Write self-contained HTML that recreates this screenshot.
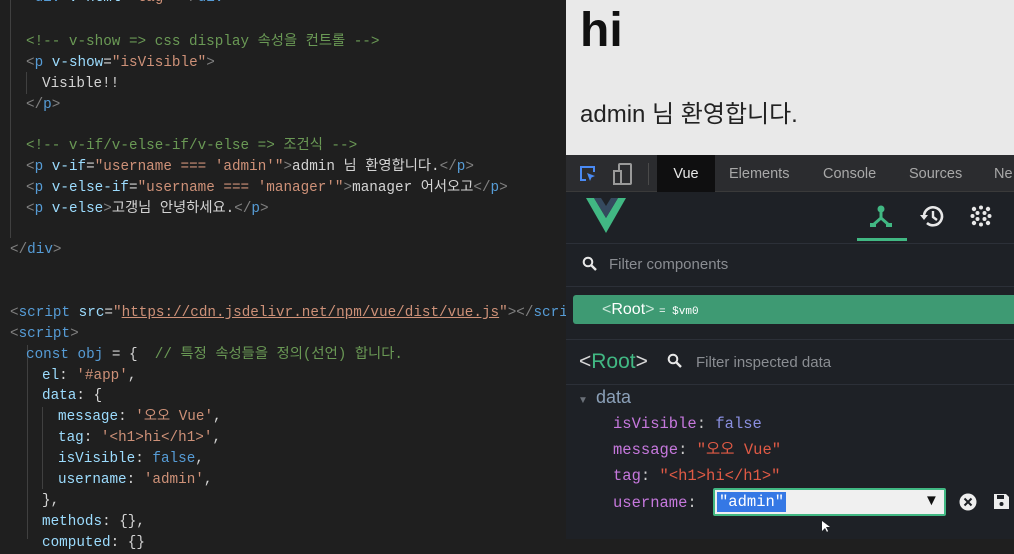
<!DOCTYPE html>
<html><head><meta charset="utf-8"><style>
*{margin:0;padding:0;box-sizing:border-box}
body{width:1014px;height:539px;overflow:hidden;background:#1f1f1f;position:relative;font-family:"Liberation Sans","Noto Sans CJK KR",sans-serif}
.ed{position:absolute;left:0;top:0;width:566px;height:539px;background:#1f1f1f;font-family:"Liberation Mono","Noto Sans CJK KR",monospace;font-size:14.3px;color:#d4d4d4}
.l{position:absolute;white-space:pre;height:21px;line-height:21px;margin-top:2px}
.t{color:#808080}.n{color:#569cd6}.a{color:#9cdcfe}.s{color:#ce9178}.c{color:#6a9955}.w{color:#d4d4d4}.k{color:#569cd6}
.guide{position:absolute;width:1px;background:#404040}
.rp{position:absolute;left:566px;top:0;width:448px;height:539px;background:#1e2126}
.page{position:absolute;left:0;top:0;width:448px;height:155px;background:#e9e9e9;color:#111}
.tabs{position:absolute;left:0;top:155px;width:448px;height:37px;background:#2b2c2f;border-bottom:1px solid #3a3a3a}
.tab{position:absolute;top:2px;height:35px;line-height:35px;font-size:14.5px;color:#a8a8a8}
.sep{position:absolute;left:0;width:448px;height:1px;background:#2c3038}
.mono{font-family:"Liberation Mono","Noto Sans CJK KR",monospace}
</style></head><body>
<div class="ed">
<div class="guide" style="left:10px;top:0;height:238px"></div>
<div class="guide" style="left:26px;top:72px;height:22px"></div>
<div class="guide" style="left:27px;top:345px;height:194px"></div>
<div class="guide" style="left:42px;top:407px;height:82px"></div>
<div class="l" style="left:26px;top:-14px"><span class="t">&lt;</span><span class="n">div</span> <span class="a">v-html</span>=<span class="s">"tag"</span><span class="t">&gt;&lt;/</span><span class="n">div</span><span class="t">&gt;</span></div>
<div class="l c" style="left:26px;top:30px">&lt;!-- v-show =&gt; css display 속성을 컨트롤 --&gt;</div>
<div class="l" style="left:26px;top:51px"><span class="t">&lt;</span><span class="n">p</span> <span class="a">v-show</span>=<span class="s">"isVisible"</span><span class="t">&gt;</span></div>
<div class="l" style="left:42px;top:72px">Visible!!</div>
<div class="l" style="left:26px;top:93px"><span class="t">&lt;/</span><span class="n">p</span><span class="t">&gt;</span></div>
<div class="l c" style="left:26px;top:134px">&lt;!-- v-if/v-else-if/v-else =&gt; 조건식 --&gt;</div>
<div class="l" style="left:26px;top:155px"><span class="t">&lt;</span><span class="n">p</span> <span class="a">v-if</span>=<span class="s">"username === 'admin'"</span><span class="t">&gt;</span>admin 님 환영합니다.<span class="t">&lt;/</span><span class="n">p</span><span class="t">&gt;</span></div>
<div class="l" style="left:26px;top:176px"><span class="t">&lt;</span><span class="n">p</span> <span class="a">v-else-if</span>=<span class="s">"username === 'manager'"</span><span class="t">&gt;</span>manager 어서오고<span class="t">&lt;/</span><span class="n">p</span><span class="t">&gt;</span></div>
<div class="l" style="left:26px;top:197px"><span class="t">&lt;</span><span class="n">p</span> <span class="a">v-else</span><span class="t">&gt;</span>고갱님 안녕하세요.<span class="t">&lt;/</span><span class="n">p</span><span class="t">&gt;</span></div>
<div class="l" style="left:10px;top:238px"><span class="t">&lt;/</span><span class="n">div</span><span class="t">&gt;</span></div>
<div class="l" style="left:10px;top:301px"><span class="t">&lt;</span><span class="n">script</span> <span class="a">src</span>=<span class="s">"<u>https://cdn.jsdelivr.net/npm/vue/dist/vue.js</u>"</span><span class="t">&gt;&lt;/</span><span class="n">scri</span></div>
<div class="l" style="left:10px;top:322px"><span class="t">&lt;</span><span class="n">script</span><span class="t">&gt;</span></div>
<div class="l" style="left:26px;top:343px"><span class="k">const</span> <span class="n">obj</span> = {  <span class="c">// 특정 속성들을 정의(선언) 합니다.</span></div>
<div class="l" style="left:42px;top:364px"><span class="a">el</span>: <span class="s">'#app'</span>,</div>
<div class="l" style="left:42px;top:384px"><span class="a">data</span>: {</div>
<div class="l" style="left:58px;top:405px"><span class="a">message</span>: <span class="s">'오오 Vue'</span>,</div>
<div class="l" style="left:58px;top:426px"><span class="a">tag</span>: <span class="s">'&lt;h1&gt;hi&lt;/h1&gt;'</span>,</div>
<div class="l" style="left:58px;top:447px"><span class="a">isVisible</span>: <span class="k">false</span>,</div>
<div class="l" style="left:58px;top:468px"><span class="a">username</span>: <span class="s">'admin'</span>,</div>
<div class="l" style="left:42px;top:489px">},</div>
<div class="l" style="left:42px;top:510px"><span class="a">methods</span>: {},</div>
<div class="l" style="left:42px;top:531px"><span class="a">computed</span>: {}</div>
</div>
<div class="rp">
<div class="page">
<div style="position:absolute;left:14px;top:3px;font-size:48px;font-weight:bold;line-height:56px">hi</div>
<div style="position:absolute;left:14px;top:100px;font-size:24px;line-height:30px;color:#222">admin 님 환영합니다.</div>
</div>
<div class="tabs">
<svg style="position:absolute;left:12px;top:9px" width="20" height="20" viewBox="0 0 20 20"><path d="M8 16H3V3h13v5" fill="none" stroke="#4a8af4" stroke-width="2"/><path d="M9 9l8 3-3.5 1.5L12 17z" fill="#4a8af4"/></svg>
<svg style="position:absolute;left:47px;top:8px" width="20" height="22" viewBox="0 0 20 22"><rect x="6" y="1" width="12" height="20" rx="1" fill="none" stroke="#9a9a9a" stroke-width="2"/><rect x="1" y="8" width="7" height="13" fill="#2b2c2f" stroke="#9a9a9a" stroke-width="2"/></svg>
<div style="position:absolute;left:82px;top:8px;width:1px;height:22px;background:#4a4a4a"></div>
<div class="tab" style="left:91px;top:0;height:37px;padding-top:2px;width:58px;background:#0f0f10;color:#e8e8e8;text-align:center">Vue</div>
<div class="tab" style="left:163px">Elements</div>
<div class="tab" style="left:257px">Console</div>
<div class="tab" style="left:343px">Sources</div>
<div class="tab" style="left:428px">Ne</div>
</div>
<svg style="position:absolute;left:20px;top:198px" width="40" height="36" viewBox="0 0 40 36"><path d="M0 0h8l12 20L32 0h8L20 35z" fill="#41b883"/><path d="M8 0h7l5 8 5-8h7L20 20z" fill="#35495e"/></svg>
<svg style="position:absolute;left:303px;top:204px" width="24" height="24" viewBox="0 0 24 24"><circle cx="12" cy="5" r="3.5" fill="#41b883"/><path d="M12 8v6L4 21M12 14l8 7" stroke="#41b883" stroke-width="3" fill="none"/><rect x="1" y="19" width="6" height="4" fill="#41b883"/><rect x="17" y="19" width="6" height="4" fill="#41b883"/></svg>
<div style="position:absolute;left:291px;top:238px;width:50px;height:3px;background:#41b883"></div>
<svg style="position:absolute;left:353px;top:204px" width="26" height="24" viewBox="0 0 26 24"><path d="M5 12a9 9 0 1 1 3 7" fill="none" stroke="#e8e8e8" stroke-width="2.6"/><path d="M1 11l4 5 4-5z" fill="#e8e8e8"/><path d="M14 7v6l4 3" fill="none" stroke="#e8e8e8" stroke-width="2.4"/></svg>
<svg style="position:absolute;left:404px;top:205px" width="22" height="22" viewBox="0 0 22 22" fill="#e8e8e8"><circle cx="4" cy="4" r="2.2"/><circle cx="11" cy="2.5" r="2"/><circle cx="18" cy="4" r="2.2"/><circle cx="7.5" cy="8" r="2"/><circle cx="14.5" cy="8" r="2"/><circle cx="2.5" cy="11" r="2"/><circle cx="19.5" cy="11" r="2"/><circle cx="7.5" cy="14" r="2"/><circle cx="14.5" cy="14" r="2"/><circle cx="4" cy="18" r="2.2"/><circle cx="11" cy="19.5" r="2"/><circle cx="18" cy="18" r="2.2"/></svg>
<div class="sep" style="top:243px"></div>
<svg style="position:absolute;left:16px;top:256px" width="16" height="16" viewBox="0 0 16 16"><circle cx="6" cy="6" r="4.3" fill="none" stroke="#e8e8e8" stroke-width="2"/><path d="M9 9l5 5" stroke="#e8e8e8" stroke-width="2.4"/></svg>
<div style="position:absolute;left:43px;top:256px;font-size:15px;color:#8a8d92">Filter components</div>
<div class="sep" style="top:286px"></div>
<div style="position:absolute;left:7px;top:295px;width:445px;height:29px;background:#3e9a73;border-radius:3px"></div>
<div style="position:absolute;left:36px;top:300px;font-size:16px;color:#fff;line-height:20px"><span style="color:#c8e6d8">&lt;</span>Root<span style="color:#c8e6d8">&gt;</span> <span class="mono" style="font-size:11px">= $vm0</span></div>
<div class="sep" style="top:339px"></div>
<div style="position:absolute;left:13px;top:349px;font-size:21px;color:#d8d8d8;line-height:26px">&lt;<span style="color:#41b883">Root</span>&gt;</div>
<svg style="position:absolute;left:101px;top:353px" width="16" height="16" viewBox="0 0 16 16"><circle cx="6" cy="6" r="4.3" fill="none" stroke="#e8e8e8" stroke-width="2"/><path d="M9 9l5 5" stroke="#e8e8e8" stroke-width="2.4"/></svg>
<div style="position:absolute;left:130px;top:354px;font-size:15px;color:#8a8d92">Filter inspected data</div>
<div class="sep" style="top:384px"></div>
<div style="position:absolute;left:12px;top:395px;font-size:10px;color:#6a7078">▼</div>
<div style="position:absolute;left:30px;top:387px;font-size:18px;color:#8ba0b8">data</div>
<div class="mono" style="position:absolute;left:47px;top:411px;font-size:15.5px;line-height:26.2px;color:#c678dd;white-space:pre">isVisible<span style="color:#ccc">:</span> <span style="color:#8a8fe0">false</span>
message<span style="color:#ccc">:</span> <span style="color:#e05a45">"오오 Vue"</span>
tag<span style="color:#ccc">:</span> <span style="color:#e05a45">"&lt;h1&gt;hi&lt;/h1&gt;"</span>
username<span style="color:#ccc">:</span></div>
<div style="position:absolute;left:147px;top:488px;width:233px;height:28px;background:#f0f0f0;border:2px solid #41b883;border-radius:2px"></div>
<div class="mono" style="position:absolute;left:151px;top:492px;height:20px;line-height:20px;padding:0 2px;background:#3578e5;color:#fff;font-size:15.5px">"admin"</div>
<div style="position:absolute;left:358px;top:492px;font-size:15px;color:#111">▼</div>
<svg style="position:absolute;left:393px;top:493px" width="18" height="18" viewBox="0 0 18 18"><circle cx="9" cy="9" r="8.5" fill="#eee"/><path d="M5.5 5.5l7 7M12.5 5.5l-7 7" stroke="#1e2126" stroke-width="2"/></svg>
<svg style="position:absolute;left:427px;top:493px" width="17" height="17" viewBox="0 0 17 17"><path d="M1 1h12l3 3v12H1z" fill="#eee"/><rect x="4" y="2" width="7" height="4" fill="#1e2126"/><circle cx="8.5" cy="11" r="2" fill="#1e2126"/></svg>
<svg style="position:absolute;left:256px;top:521px" width="8" height="12" viewBox="0 0 8 12"><path d="M0 0v10l3-3 2 4 1-1-2-4h4z" fill="#fff"/></svg>
</div>
</body></html>
